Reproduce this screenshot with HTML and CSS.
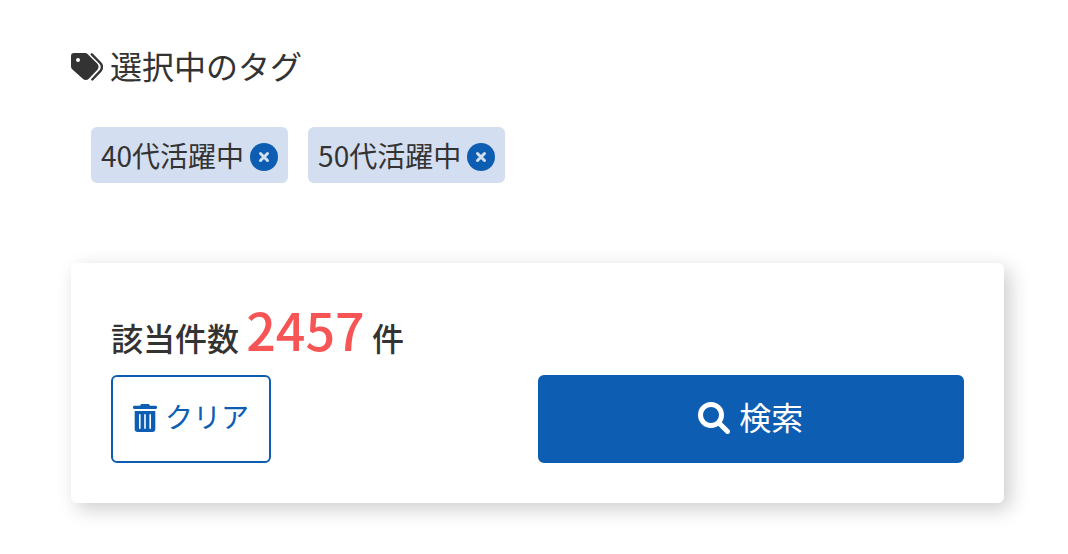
FILE: index.html
```html
<!DOCTYPE html>
<html lang="ja">
<head>
  <meta charset="UTF-8" />
  <meta name="viewport" content="width=device-width, initial-scale=1.0" />
  <title>選択中のタグ</title>
  <link rel="stylesheet" href="styles.css">
</head>
<body>
  <main class="search-panel">
    <h2 class="tag-title">
      <svg class="icon-tags" viewBox="0 0 32 28" aria-hidden="true">
        <path fill="currentColor" fill-rule="evenodd" d="M0 3a3 3 0 0 1 3-3h11a4 4 0 0 1 2.800 1.170l9.400 9.400a4.500 4.500 0 0 1 0 6.400l-8.400 8.700a4.200 4.200 0 0 1-6 0L1.170 16.200A4 4 0 0 1 0 13.400zM7 5a2 2 0 1 0 0 4 2 2 0 0 0 0-4z"/>
        <path fill="none" stroke="currentColor" stroke-width="2.400" stroke-linecap="round" d="M20.800 1.300l8.500 8.700a5.800 5.800 0 0 1 0 8.100l-8 8.400"/>
      </svg>
      選択中のタグ
    </h2>
    <ul class="tag-list">
      <li class="tag">
        <span>40代活躍中</span>
        <button type="button" class="tag-remove" aria-label="40代活躍中を外す">
          <svg viewBox="0 0 28 28" aria-hidden="true"><path d="M10.500 10.500l7 7M17.500 10.500l-7 7"/></svg>
        </button>
      </li>
      <li class="tag">
        <span>50代活躍中</span>
        <button type="button" class="tag-remove" aria-label="50代活躍中を外す">
          <svg viewBox="0 0 28 28" aria-hidden="true"><path d="M10.500 10.500l7 7M17.500 10.500l-7 7"/></svg>
        </button>
      </li>
    </ul>

    <section class="result-box">
      <p class="result-count">該当件数 <span class="count">2457</span> 件</p>
      <div class="buttons">
        <button type="button" class="btn btn-clear">
          <svg class="icon-trash" viewBox="0 0 24 28" aria-hidden="true">
            <path fill="currentColor" d="M1.500 1.800H7l.6-1.100A1.300 1.300 0 0 1 8.800 0h6.400a1.300 1.300 0 0 1 1.200.7l.6 1.100h5.500a1.500 1.500 0 0 1 0 3.200h-21a1.500 1.500 0 0 1 0-3.200z"/>
            <path fill="currentColor" fill-rule="evenodd" d="M1.700 7h20.600v18a3 3 0 0 1-3 3H4.700a3 3 0 0 1-3-3zM6 10.800v13.400a.8.8 0 0 0 1.600 0V10.800a.8.8 0 0 0-1.600 0zM11.200 10.800v13.400a.8.8 0 0 0 1.600 0V10.800a.8.8 0 0 0-1.600 0zM16.400 10.800v13.400a.8.8 0 0 0 1.600 0V10.800a.8.8 0 0 0-1.600 0z"/>
          </svg>
          <span>クリア</span>
        </button>
        <button type="submit" class="btn btn-search">
          <svg class="icon-search" viewBox="0 0 32 32" aria-hidden="true">
            <circle cx="13" cy="13" r="10.500"/>
            <path d="M21 21l8.500 8.500"/>
          </svg>
          <span>検索</span>
        </button>
      </div>
    </section>
  </main>
</body>
</html>
```
FILE: styles.css
```css
* { margin: 0; padding: 0; box-sizing: border-box; }
body {
  background: #fff;
  color: #333;
  font-family: "Noto Sans CJK JP", sans-serif;
}
button { font-family: inherit; cursor: pointer; }
svg { display: block; flex: none; }
.search-panel { padding: 41px 64px 50px 71px; }

.tag-title {
  display: flex;
  align-items: center;
  gap: 7px;
  font-size: 32px;
  font-weight: 400;
  line-height: 48px;
}
.icon-tags { width: 32px; height: 28px; margin-top: 4px; }
.tag-list {
  display: flex;
  flex-wrap: wrap;
  gap: 20px;
  margin: 38px 20px 80px;
  list-style: none;
}
.tag {
  display: flex;
  align-items: center;
  gap: 6px;
  height: 56px;
  padding: 0 10px;
  border-radius: 6px;
  background: #d3def0;
  font-size: 28px;
}
.tag-remove {
  width: 28px;
  height: 28px;
  margin-top: 4px;
  border: none;
  border-radius: 50%;
  background: #0d5eb2;
}
.tag-remove path {
  fill: none;
  stroke: #d3def0;
  stroke-width: 3;
  stroke-linecap: round;
}

.result-box {
  padding: 38px 40px 40px;
  border-radius: 6px;
  background: #fff;
  box-shadow: 6px 6px 20px rgba(0, 0, 0, 0.2);
}
.result-count {
  margin-bottom: 2px;
  font-size: 32px;
  font-weight: 500;
  line-height: 72px;
}
.count {
  color: #f75555;
  font-size: 52px;
  line-height: 56px;
}
.buttons {
  display: flex;
  justify-content: space-between;
}
.btn {
  display: flex;
  align-items: center;
  justify-content: center;
  height: 88px;
  padding-bottom: 6px;
  border: 2px solid #0d5eb2;
  border-radius: 6px;
}
.btn svg { margin-top: 4px; }
.btn-clear {
  gap: 8px;
  padding-left: 20px;
  padding-right: 20px;
  background: #fff;
  color: #0d5eb2;
  font-size: 28px;
}
.icon-trash { width: 24px; height: 28px; }
.btn-search {
  gap: 9px;
  width: 50%;
  background: #0d5eb2;
  color: #fff;
  font-size: 32px;
}
.icon-search {
  width: 32px;
  height: 32px;
  fill: none;
  stroke: currentColor;
  stroke-width: 5;
  stroke-linecap: round;
}
```
